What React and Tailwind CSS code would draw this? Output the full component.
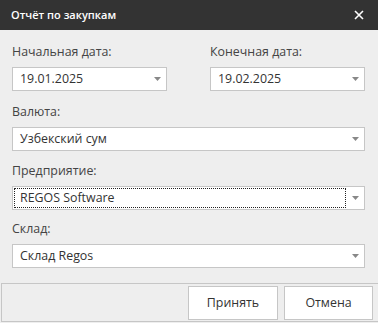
import React from 'react';

const Caret = () => (
  <svg width="7" height="4" viewBox="0 0 7 4" className="shrink-0">
    <path d="M0 0h7L3.5 4z" fill="#888" />
  </svg>
);

const Select = ({ value, focused = false, className = '' }) => (
  <div className={`flex h-[24px] items-center border border-[#c6c6c6] bg-white ${className}`}>
    <div className="flex min-w-0 flex-1 items-center self-stretch p-[1px]">
      <div
        className={`flex h-full flex-1 items-center pl-[5px] ${focused ? 'border border-dotted border-[#222]' : 'border border-transparent'}`}
      >
        {value}
      </div>
    </div>
    <div className="flex w-[17px] items-center justify-center">
      <Caret />
    </div>
  </div>
);

const Field = ({ label, children, className = '' }) => (
  <div className={className}>
    <div className="mb-[6px] text-[#444]">{label}</div>
    {children}
  </div>
);

const App = () => {
  return (
    <div
      className="flex h-[323px] w-[378px] flex-col bg-[#eeeeee] text-[12.4px] leading-[18px] text-[#333]"
      style={{ fontFamily: '"Open Sans", "Noto Sans", sans-serif' }}
    >
      <div className="flex h-[30px] items-center justify-between bg-[#333333] pl-[11px] pr-[14px] text-white">
        <span className="text-[11px] font-semibold">Отчёт по закупкам</span>
        <svg width="10" height="10" viewBox="0 0 10 10">
          <path d="M1 1l8 8M9 1l-8 8" stroke="#fff" strokeWidth="1.6" />
        </svg>
      </div>

      <div className="flex flex-1 flex-col px-[12px] pt-[13px]">
        <div className="flex gap-[43px]">
          <Field label="Начальная дата:" className="w-[155px]">
            <Select value="19.01.2025" />
          </Field>
          <Field label="Конечная дата:" className="w-[155px]">
            <Select value="19.02.2025" />
          </Field>
        </div>
        <Field label="Валюта:" className="mt-[12px] mr-[1px]">
          <Select value="Узбекский сум" />
        </Field>
        <Field label="Предприятие:" className="mt-[11px] mr-[1px]">
          <Select value="REGOS Software" focused />
        </Field>
        <Field label="Склад:" className="mt-[10px] mr-[1px]">
          <Select value="Склад Regos" />
        </Field>
      </div>

      <div className="mb-[1px] ml-[1px] flex h-[39px] items-center justify-end gap-[6px] border-t border-b border-l border-[#c6c6c6] pr-[5px]">
        <button className="h-[34px] w-[90px] border border-[#c6c6c6] bg-white text-[#333]">Принять</button>
        <button className="h-[34px] w-[89px] border border-[#c6c6c6] bg-white text-[#333]">Отмена</button>
      </div>
    </div>
  );
};

export default App;
